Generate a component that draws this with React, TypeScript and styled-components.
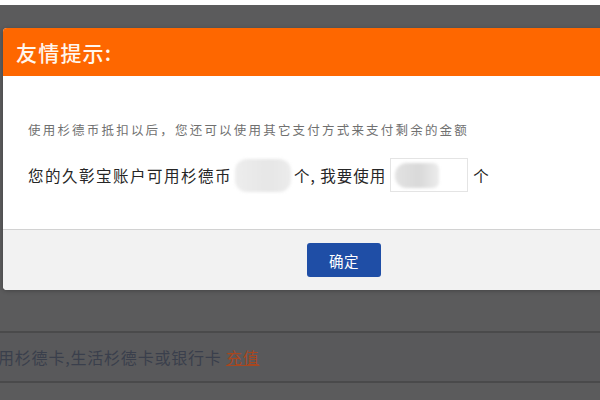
import React from 'react';
import styled, { createGlobalStyle } from 'styled-components';

const GlobalStyle = createGlobalStyle`
  html, body {
    margin: 0;
    padding: 0;
    background: #ffffff;
  }
  body {
    font-family: "Noto Sans CJK SC", "Noto Sans", "Liberation Sans", sans-serif;
  }
`;

const App = () => {
  return (
    <>
      <GlobalStyle />
      <Screen>
        <Dialog>
          <Header>
            <Title>友情提示:</Title>
          </Header>
          <Body>
            <Hint>使用杉德币抵扣以后，您还可以使用其它支付方式来支付剩余的金额</Hint>
            <AmountRow>
              <Label>您的久彰宝账户可用杉德币</Label>
              <Masked />
              <Label $tight>个, 我要使用</Label>
              <AmountInput>
                <MaskedValue />
              </AmountInput>
              <Label>个</Label>
            </AmountRow>
          </Body>
          <Footer>
            <ConfirmButton>确定</ConfirmButton>
          </Footer>
        </Dialog>
        <PageRow>
          <RowText>
            用杉德卡,生活杉德卡或银行卡 <RechargeLink>充值</RechargeLink>
          </RowText>
        </PageRow>
      </Screen>
    </>
  );
};

export default App;

const Screen = styled.div`
  margin-top: 5px;
  height: 395px;
  overflow: hidden;
  background: #5b5b5c;
  display: flex;
  flex-direction: column;
`;

const Dialog = styled.div`
  margin: 23px 0 0 3px;
  width: 682px;
  flex-shrink: 0;
  background: #ffffff;
  border-radius: 4px;
  overflow: hidden;
  box-shadow: 0 1px 4px rgba(0, 0, 0, 0.25);
`;

const Header = styled.div`
  height: 48px;
  background: #fe6700;
  display: flex;
  align-items: center;
  padding-left: 13px;
`;

const Title = styled.h2`
  margin: 0;
  font-size: 21px;
  font-weight: 500;
  color: #fff6ee;
  letter-spacing: 1.2px;
`;

const Body = styled.div`
  padding: 44px 0 37px 25px;
  border-bottom: 1px solid #d2d2d2;
`;

const Hint = styled.p`
  margin: 0 0 18px;
  font-size: 12.5px;
  line-height: 20px;
  letter-spacing: 2.2px;
  color: #707070;
`;

const AmountRow = styled.div`
  display: flex;
  align-items: center;
  height: 34px;
`;

const Label = styled.span<{ $tight?: boolean }>`
  font-size: 15.5px;
  letter-spacing: ${({ $tight }) => ($tight ? '1px' : '1.5px')};
  color: #262626;
  margin-right: ${({ $tight }) => ($tight ? '4px' : '0')};
`;

const Masked = styled.span`
  display: block;
  width: 56px;
  height: 33px;
  margin: 0 3px 0 3px;
  border-radius: 12px;
  background: linear-gradient(90deg, #ededed 0%, #e6e6e6 60%, #ececec 100%);
  filter: blur(1.5px);
`;

const AmountInput = styled.div`
  width: 78px;
  height: 34px;
  box-sizing: border-box;
  border: 1px solid #e4e4e4;
  display: flex;
  align-items: center;
  padding-left: 4px;
  margin-right: 5px;
`;

const MaskedValue = styled.span`
  display: block;
  width: 44px;
  height: 25px;
  border-radius: 12px 6px 6px 12px;
  background: linear-gradient(90deg, #e2e2e2 0%, #d9d9d9 55%, #ececec 100%);
  filter: blur(1.5px);
`;

const Footer = styled.div`
  height: 60px;
  background: #f2f2f2;
  display: flex;
  align-items: center;
  justify-content: center;
`;

const ConfirmButton = styled.button`
  width: 74px;
  height: 34px;
  border: none;
  border-radius: 3px;
  background: #1f4ea6;
  color: #ffffff;
  font-family: inherit;
  font-size: 14.5px;
  letter-spacing: 0.5px;
  cursor: pointer;
`;

const PageRow = styled.div`
  margin-top: 41px;
  height: 48px;
  flex-shrink: 0;
  border-top: 2px solid #4a4a4b;
  border-bottom: 2px solid #4a4a4b;
  background: #59595b;
  display: flex;
  align-items: center;
`;

const RowText = styled.span`
  margin-left: -2px;
  font-size: 16px;
  letter-spacing: 0.8px;
  color: #3a3f4c;
  white-space: nowrap;
`;

const RechargeLink = styled.a`
  color: #a8471f;
  text-decoration: underline;
`;
